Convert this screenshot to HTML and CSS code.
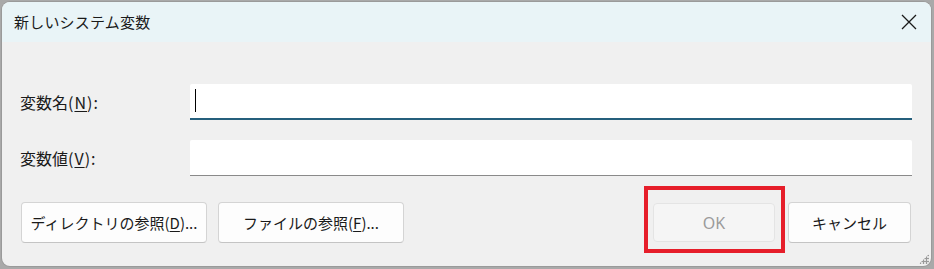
FILE: index.html
```html
<!DOCTYPE html>
<html lang="ja">
<head>
<meta charset="utf-8">
<link rel="stylesheet" href="styles.css">
</head>
<body>
<div class="window">
  <div class="titlebar">
    <span class="title">新しいシステム変数</span>
    <span class="close">
      <svg width="16" height="16" viewBox="0 0 16 16"><path d="M1 1 L15 15 M15 1 L1 15" stroke="#1a1a1a" stroke-width="1.3" fill="none"/></svg>
    </span>
  </div>
  <div class="content">
    <div class="row">
      <span class="label">変数名<span class="lat">(<u>N</u>):</span></span>
      <div class="input focused"><span class="caret"></span></div>
    </div>
    <div class="row">
      <span class="label">変数値<span class="lat">(<u>V</u>):</span></span>
      <div class="input"></div>
    </div>
    <div class="buttons">
      <div class="left">
        <button class="btn wide">ディレクトリの参照(<u>D</u>)...</button>
        <button class="btn wide">ファイルの参照(<u>F</u>)...</button>
      </div>
      <div class="right">
        <div class="okwrap">
          <button class="btn ok" disabled>OK</button>
          <span class="highlight"></span>
        </div>
        <button class="btn cancel">キャンセル</button>
      </div>
    </div>
  </div>
  <span class="grip"></span>
</div>
</body>
</html>
```

FILE: styles.css
```css
html, body {
  margin: 0;
  padding: 0;
  background: #a9a9a9;
  width: 934px;
  height: 269px;
  overflow: hidden;
}
body {
  font-family: "Noto Sans CJK JP", "Noto Sans", sans-serif;
  color: #1a1a1a;
}
.window {
  position: relative;
  margin: 2px 3px 0 2px;
  width: 929px;
  height: 264px;
  background: #f0f0f0;
  border-radius: 8px;
  overflow: hidden;
  display: flex;
  flex-direction: column;
  box-shadow: 0 0 0 1px #9a9a9a;
}
.titlebar {
  height: 40px;
  flex: none;
  background: #e9f4f7;
  display: flex;
  align-items: center;
  justify-content: space-between;
  padding: 0 14px 0 12px;
}
.title {
  font-size: 15px;
  letter-spacing: 0.2px;
  margin-top: -2px;
}
.close {
  display: flex;
  width: 16px;
  height: 16px;
}
.content {
  padding: 42px 19px 0 18px;
  display: flex;
  flex-direction: column;
}
.row {
  display: flex;
  align-items: center;
  height: 36px;
  margin-bottom: 20px;
}
.label {
  width: 170px;
  font-size: 16px;
}
.lat {
  letter-spacing: 1px;
}
.label u, .btn u {
  text-underline-offset: 2px;
}
.input {
  flex: 1;
  height: 35px;
  background: #fff;
  border-bottom: 1px solid #8a8a8a;
  border-radius: 2px 2px 0 0;
  position: relative;
}
.input.focused {
  height: 34px;
  border-bottom: 2px solid #255f7c;
}
.caret {
  position: absolute;
  left: 5px;
  top: 5px;
  width: 1px;
  height: 23px;
  background: #000;
}
.buttons {
  margin-top: 6px;
  display: flex;
  justify-content: space-between;
  align-items: center;
}
.left, .right {
  display: flex;
  align-items: center;
}
.left {
  gap: 11px;
  margin-left: 1px;
}
.btn {
  font-family: "Noto Sans CJK JP", "Noto Sans", sans-serif;
  font-size: 15px;
  color: #1a1a1a;
  background: #fdfdfd;
  border: 1px solid #d4d4d4;
  border-bottom-color: #c4c4c4;
  border-radius: 4px;
  height: 41px;
  padding: 0;
}
.wide {
  width: 186px;
}
.okwrap {
  position: relative;
  margin-right: 13px;
}
.ok {
  display: block;
  width: 122px;
  height: 39px;
  background: #f5f5f5;
  border-color: #e4e4e4;
  color: #9b9b9b;
  font-family: "Noto Sans", sans-serif;
  font-size: 16px;
}
.highlight {
  position: absolute;
  left: -9px;
  top: -17px;
  right: -10px;
  bottom: -11px;
  border: 4px solid #e61e2a;
}
.cancel {
  width: 123px;
  margin-right: 1px;
}
.grip {
  position: absolute;
  right: 2px;
  bottom: 2px;
  width: 10px;
  height: 10px;
  background:
    radial-gradient(circle, #9a9a9a 1px, transparent 1.5px) 0 0 / 3px 3px;
  clip-path: polygon(100% 0, 100% 100%, 0 100%);
}
```
